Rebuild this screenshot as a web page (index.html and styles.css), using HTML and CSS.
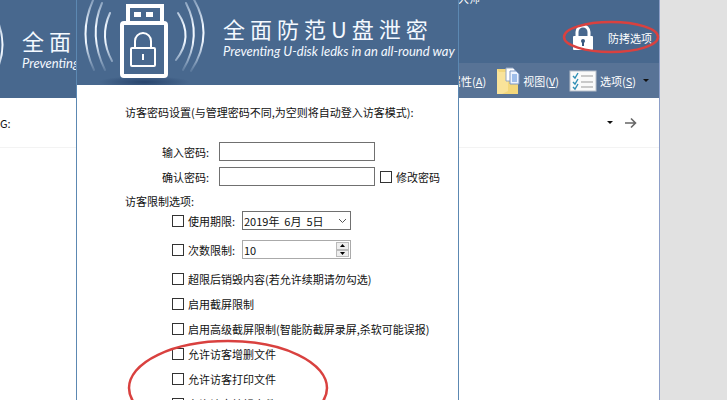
FILE: index.html
```html
<!DOCTYPE html>
<html lang="zh-CN">
<head>
    <meta charset="utf-8">
    <title>全面防范U盘泄密</title>
    <link rel="stylesheet" href="styles.css">
</head>
<body>
    <svg class="defs" width="0" height="0">
        <symbol id="usb" viewBox="0 0 133 85">
            <ellipse cx="67" cy="82" rx="46" ry="6" fill="url(#shade)"/>
            <g fill="none" stroke-linecap="round">
                <g stroke="url(#fade)">
                    <path d="M17 -2Q0 34 17 70" stroke-width="2"/>
                    <path d="M25 3Q11 35 28 70" stroke-width="2"/>
                    <path d="M33 13Q22 37 35 61" stroke-width="2"/>
                    <path d="M101 13Q117 37 99 60" stroke-width="2"/>
                    <path d="M109 3Q126 36 106 70" stroke-width="2"/>
                    <path d="M116 -2Q138 34 114 71" stroke-width="2"/>
                </g>
                <g stroke="#fff">
                    <path d="M51 23V6H85V23" stroke-width="4" stroke-linecap="butt"/>
                    <rect x="45" y="23" width="44" height="53" rx="2" stroke-width="4"/>
                    <rect x="54" y="48" width="24" height="18" rx="1" stroke-width="2"/>
                    <path d="M58 48V41A8 8 0 0 1 74 41V48" stroke-width="2"/>
                </g>
            </g>
            <path d="M57 12H64V17H57ZM69 12H76V17H69ZM65 54H67V60H65Z" fill="#fff"/>
        </symbol>
        <defs>
            <linearGradient id="fade" gradientUnits="userSpaceOnUse" x1="0" y1="-4" x2="0" y2="72">
                <stop offset="0" stop-color="#dcecff" stop-opacity=".3"/>
                <stop offset=".4" stop-color="#f0f7ff"/>
                <stop offset=".6" stop-color="#f0f7ff"/>
                <stop offset="1" stop-color="#dcecff" stop-opacity=".1"/>
            </linearGradient>
            <radialGradient id="shade">
                <stop offset="0" stop-color="#28446c"/>
                <stop offset="1" stop-color="#28446c" stop-opacity="0"/>
            </radialGradient>
        </defs>
    </svg>

    <main class="window">
        <header class="topbar">
            <div class="brand brand-back">
                <svg class="usb"><use href="#usb"/></svg>
                <div class="brand-text">
                    <p class="title">全面</p>
                    <p class="subtitle">Preventing</p>
                </div>
            </div>
            <div class="top-right">
                <div class="actions">
                    <span class="caption">大师</span>
                    <button class="lock-button">
                        <svg width="22" height="26" viewBox="0 0 22 26">
                            <path d="M5 12V7A6 6 0 0 1 17 7V12" fill="none" stroke="#fff" stroke-width="3"/>
                            <rect x="1" y="11" width="20" height="14" rx="1" fill="#fff"/>
                            <circle cx="11" cy="16" r="2" fill="#38577e"/>
                            <path d="M10 16H12V21H10Z" fill="#38577e"/>
                        </svg>
                        <span>防拷选项</span>
                    </button>
                    <svg class="mark mark-lock" viewBox="0 0 98 34">
                        <ellipse cx="49" cy="17" rx="47" ry="15"/>
                    </svg>
                </div>
                <nav class="toolbar">
                    <button class="tool"><span>属性(<u>A</u>)</span></button>
                    <button class="tool">
                        <svg width="24" height="28" viewBox="0 0 24 28">
                            <path d="M1 2H10L12 5H22V27H1Z" fill="#f3d77b"/>
                            <path d="M3 5H12V24L6 27H1V2Z" fill="#f9e39a"/>
                            <path d="M10 1H17L19 3V14H10Z" fill="#fff" stroke="#93a6c4"/>
                            <path d="M14 4H20L23 7V17H14Z" fill="#eef4ff" stroke="#7c97c6"/>
                            <path d="M16 8H21M16 10H21M16 12H21M16 14H21" stroke="#4e86d6"/>
                        </svg>
                        <span>视图(<u>V</u>)</span>
                    </button>
                    <button class="tool">
                        <svg width="28" height="22" viewBox="0 0 28 22">
                            <rect x="1" y="1" width="26" height="20" fill="#fafafa" stroke="#b8c0ca"/>
                            <path d="M4 6L6 8L9 3M4 12L6 14L9 9M4 17L6 19L9 14" fill="none" stroke="#2f8fb5" stroke-width="1.4"/>
                            <path d="M12 6H24M12 12H24M12 17H24" stroke="#999"/>
                        </svg>
                        <span>选项(<u>S</u>)</span>
                        <i class="caret"></i>
                    </button>
                </nav>
            </div>
        </header>
        <div class="address">
            <span>G:</span>
            <div class="address-end">
                <i class="caret"></i>
                <svg width="13" height="12" viewBox="0 0 13 12">
                    <path d="M1 6H11M7 1.500L11.500 6L7 10.500" fill="none" stroke="#666" stroke-width="1.6"/>
                </svg>
            </div>
        </div>
    </main>

    <form class="dialog">
        <header class="brand">
            <svg class="usb"><use href="#usb"/></svg>
            <div class="brand-text">
                <h1 class="title">全面防范U盘泄密</h1>
                <p class="subtitle">Preventing U-disk ledks in an all-round way</p>
            </div>
        </header>
        <div class="content">
            <h2>访客密码设置(与管理密码不同,为空则将自动登入访客模式):</h2>
            <div class="passwords">
                <div class="row">
                    <label for="pwd">输入密码:</label>
                    <input class="field" type="password" id="pwd">
                </div>
                <div class="row">
                    <label for="pwd2">确认密码:</label>
                    <input class="field" type="password" id="pwd2">
                    <label class="check"><input type="checkbox">修改密码</label>
                </div>
            </div>
            <h2>访客限制选项:</h2>
            <div class="limits">
                <div class="row">
                    <label class="check"><input type="checkbox">使用期限:</label>
                    <div class="date">
                        <select aria-label="使用期限">
                            <option>2019年&nbsp;&nbsp;6月&nbsp;&nbsp;5日</option>
                        </select>
                        <svg width="9" height="6" viewBox="0 0 9 6"><path d="M1 1L4.500 4.500L8 1" fill="none" stroke="#555"/></svg>
                    </div>
                </div>
                <div class="row">
                    <label class="check"><input type="checkbox">次数限制:</label>
                    <div class="spinner">
                        <input type="number" value="10" aria-label="次数限制">
                        <div class="steps">
                            <button type="button" aria-label="增加"><svg width="5" height="3"><path d="M0 3L2.500 0L5 3Z"/></svg></button>
                            <button type="button" aria-label="减少"><svg width="5" height="3"><path d="M0 0L2.500 3L5 0Z"/></svg></button>
                        </div>
                    </div>
                </div>
            </div>
            <div class="options">
                <label class="check"><input type="checkbox">超限后销毁内容(若允许续期请勿勾选)</label>
                <label class="check"><input type="checkbox">启用截屏限制</label>
                <label class="check"><input type="checkbox">启用高级截屏限制(智能防截屏录屏,杀软可能误报)</label>
                <label class="check"><input type="checkbox">允许访客增删文件</label>
                <label class="check"><input type="checkbox">允许访客打印文件</label>
                <label class="check"><input type="checkbox">允许访客编辑文件</label>
            </div>
        </div>
        <svg class="mark mark-options" viewBox="0 0 202 98">
            <ellipse cx="101" cy="49" rx="99" ry="47"/>
        </svg>
    </form>
</body>
</html>
```

FILE: styles.css
```css
* { box-sizing: border-box; }
body { margin: 0; height: 100vh; overflow: hidden; position: relative; padding-right: 67px; background: #e1e1e1; color: #111; font: 11px/16px "Noto Sans CJK SC", sans-serif; }
h1, h2, p { margin: 0; font-size: 11px; font-weight: normal; }
button, input, select { font: inherit; color: inherit; margin: 0; padding: 0; border-radius: 0; }
button { border: none; background: none; }
svg { display: block; flex: none; }
.defs { position: absolute; }

/* main window */
.window { min-height: 100vh; background: #fff; border-right: 1px solid #8d9fc8; }
.topbar { display: flex; height: 98px; background: #48688e; color: #fff; }
.top-right { flex: 1; margin-left: 250px; }
.actions { position: relative; display: flex; justify-content: space-between; height: 63px; }
.caption { margin: -10px 0 0 132px; }
.lock-button { display: flex; align-items: center; gap: 14px; height: 26px; margin: 25px 7px 0 0; }
.toolbar { display: flex; justify-content: flex-end; align-items: center; gap: 10px; height: 35px; padding-right: 10px; background: #587396; white-space: nowrap; }
.tool { display: flex; align-items: center; gap: 3px; }
.caret { border: 3px solid transparent; border-top-color: #111; border-bottom: none; }
.tool .caret { margin-left: 4px; }
.address { display: flex; align-items: center; justify-content: space-between; height: 50px; padding-right: 22px; border-bottom: 1px solid #f3f3f3; }
.address-end { display: flex; align-items: center; gap: 11px; }

/* brand banner */
.brand { display: flex; height: 85px; background: #48688e; color: #f4f9ff; overflow: hidden; }
.usb { width: 133px; height: 85px; }
.brand-text { padding: 12px 0 0 13px; white-space: nowrap; }
.title { font-size: 22px; line-height: 32px; letter-spacing: 5px; }
.subtitle { font: italic 13px/14px Lato, sans-serif; }
.brand-back { width: 76px; height: 98px; padding-top: 12px; }
.brand-back .usb { margin-left: -124px; }

/* dialog */
.dialog { position: absolute; top: 0; left: 76px; width: 383px; min-height: 100vh; background: #fff; border: solid #5c88b2; border-width: 0 1px; }
.content { padding: 19px 0 0 48px; }
.row, .check { display: flex; align-items: center; white-space: nowrap; }
.check { gap: 4px; }
.check input { appearance: none; width: 12px; height: 12px; border: 1px solid #333; background: #fff; }
.passwords { display: grid; gap: 6px; padding: 22px 0 7px 37px; }
.passwords .row > label:first-child { width: 57px; }
.passwords .check { margin-left: 5px; }
.field { width: 156px; height: 19px; border: 1px solid #707070; background: #fff; }
.limits { display: grid; gap: 10px; padding: 2px 0 6px 47px; }
.limits .check { width: 70px; }
.date { position: relative; width: 109px; }
.date select { appearance: none; display: block; width: 100%; height: 19px; padding-left: 1px; border: 1px solid #707070; background: #fff; }
.date svg { position: absolute; right: 4px; top: 7px; pointer-events: none; }
.spinner { display: flex; width: 109px; height: 19px; padding: 1px; border: 1px solid #aaa; }
.spinner input { appearance: textfield; flex: 1; min-width: 0; border: none; line-height: 12px; }
.spinner input::-webkit-inner-spin-button { display: none; }
.steps { display: grid; width: 13px; }
.steps button { display: grid; place-items: center; border: 1px solid #bbb; background: #eee; }
.options { display: grid; gap: 9px; padding: 6px 0 0 47px; }

/* red pen marks */
.mark { position: absolute; fill: none; stroke: #d9413f; stroke-width: 2.5; pointer-events: none; }
.mark-lock { top: 20px; right: -1px; width: 98px; height: 34px; }
.mark-options { top: 339px; left: 50px; width: 202px; height: 98px; }
```
